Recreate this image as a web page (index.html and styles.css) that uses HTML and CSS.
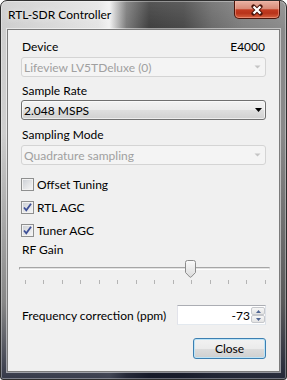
FILE: index.html
```html
<!DOCTYPE html>
<html>
<head>
<meta charset="utf-8">
<title>RTL-SDR Controller</title>
<link rel="stylesheet" href="styles.css">
</head>
<body>
<div class="window">
  <div class="titlebar">
    <span class="title">RTL-SDR Controller</span>
    <div class="close-x">
      <svg width="14" height="12" viewBox="0 0 14 12"><path d="M3.5 2.5 L10.5 9.5 M10.5 2.5 L3.5 9.5" stroke="#4a140a" stroke-width="4.2" stroke-linecap="round"/><path d="M3.5 2.5 L10.5 9.5 M10.5 2.5 L3.5 9.5" stroke="#ffffff" stroke-width="2.3"/></svg>
    </div>
  </div>
  <div class="client">
    <div class="label-row"><span>Device</span><span>E4000</span></div>
    <div class="combo disabled gap-s">
      <span>Lifeview LV5TDeluxe (0)</span>
      <svg class="arrow-sm" width="7" height="4" viewBox="0 0 7 4"><path d="M0.5 0.5 H6.5 L3.5 3.5 Z" fill="#c4c4c4"/></svg>
    </div>
    <div class="label gap-l2">Sample Rate</div>
    <div class="combo enabled gap-xs">
      <span>2.048 MSPS</span>
      <svg width="7" height="4" viewBox="0 0 7 4"><path d="M0 0 H7 L3.5 4 Z" fill="#000"/></svg>
    </div>
    <div class="label gap-l3">Sampling Mode</div>
    <div class="combo disabled gap-s">
      <span>Quadrature sampling</span>
      <svg class="arrow-sm" width="7" height="4" viewBox="0 0 7 4"><path d="M0.5 0.5 H6.5 L3.5 3.5 Z" fill="#c4c4c4"/></svg>
    </div>

    <div class="checks">
      <label class="check"><span class="box"></span><span>Offset Tuning</span></label>
      <label class="check"><span class="box"><svg width="11" height="11" viewBox="0 0 11 11"><path d="M2 5.5 L4.3 8.3 L9 1.8" fill="none" stroke="#3d4f97" stroke-width="1.8"/></svg></span><span>RTL AGC</span></label>
      <label class="check"><span class="box"><svg width="11" height="11" viewBox="0 0 11 11"><path d="M2 5.5 L4.3 8.3 L9 1.8" fill="none" stroke="#3d4f97" stroke-width="1.8"/></svg></span><span>Tuner AGC</span></label>
    </div>

    <div class="label gap-rf">RF Gain</div>
    <div class="slider">
      <div class="track"></div>
      <div class="ticks"><i></i><i></i><i></i><i></i><i></i><i></i><i></i><i></i><i></i><i></i><i></i><i></i><i></i><i></i></div>
      <svg class="thumb" width="11" height="18" viewBox="0 0 11 18">
        <defs><linearGradient id="tg" x1="0" y1="0" x2="0" y2="1"><stop offset="0" stop-color="#fbfbfb"/><stop offset="1" stop-color="#dadada"/></linearGradient></defs>
        <path d="M0.5 2.5 Q0.5 0.5 2.5 0.5 H8.5 Q10.5 0.5 10.5 2.5 V12.5 L6.2 17 Q5.5 17.6 4.8 17 L0.5 12.5 Z" fill="url(#tg)" stroke="#8c8c8c"/>
      </svg>
    </div>

    <div class="freq">
      <span class="freq-label">Frequency correction (ppm)</span>
      <div class="num">
        <span class="num-val">-73</span>
        <div class="spin">
          <span class="spin-btn"><svg width="5" height="3" viewBox="0 0 5 3"><path d="M0 3 L2.5 0 L5 3 Z" fill="#4f6592"/></svg></span>
          <span class="spin-btn"><svg width="5" height="3" viewBox="0 0 5 3"><path d="M0 0 H5 L2.5 3 Z" fill="#4f6592"/></svg></span>
        </div>
      </div>
    </div>

    <div class="btn-row">
      <button class="btn">Close</button>
    </div>
  </div>
</div>
</body>
</html>
```

FILE: styles.css
```css
* { box-sizing: border-box; }
html, body { margin: 0; padding: 0; }
body {
  width: 287px;
  height: 380px;
  overflow: hidden;
  background: #ffffff;
  font-family: Lato, "Segoe UI", "Liberation Sans", sans-serif;
  font-size: 12px;
  color: #000;
}
.window {
  width: 287px;
  height: 380px;
  border: 1px solid #2e2e2e;
  border-radius: 7px 7px 3px 3px;
  padding: 0 6px 7px;
  display: flex;
  flex-direction: column;
  background:
    linear-gradient(to bottom, rgba(255,255,255,0.12) 0, rgba(0,0,0,0) 8%, rgba(0,0,0,0) 35%, rgba(0,0,0,0.35) 80%, rgba(10,15,35,0.78) 100%),
    linear-gradient(to right, #cdcdcd 0, #dadada 20%, #e4e4e4 34%, #f2f2f2 38%, #7a7a7a 44%, #3e3e3e 52%, #474747 64%, #6a6a6a 74%, #7e7e7e 85%, #8a8a8a 100%);
  box-shadow: inset 0 0 0 1px rgba(255,255,255,0.35);
}
.titlebar {
  height: 28px;
  display: flex;
  justify-content: space-between;
  align-items: flex-start;
}
.title {
  padding: 6px 0 0 1px;
  line-height: 15px;
  text-shadow: 0 0 6px rgba(255,255,255,0.9);
}
.close-x {
  width: 46px;
  height: 18px;
  border: 1px solid #4d1409;
  border-top: none;
  border-radius: 0 0 5px 5px;
  background: linear-gradient(#e8b2a3 0%, #d98b78 45%, #c23b21 52%, #b8331a 72%, #d6613f 100%);
  box-shadow: inset 0 0 0 1px rgba(255,190,175,0.45);
  display: flex;
  align-items: center;
  justify-content: center;
}
.client {
  flex: 1;
  background: #f0f0f0;
  border: 1px solid #7b7b7b;
  box-shadow: 0 0 0 1px rgba(255,255,255,0.5);
  padding: 9px 13px 0;
  display: flex;
  flex-direction: column;
}
.label, .label-row {
  line-height: 15px;
  height: 15px;
  padding-left: 1px;
}
.label-row {
  display: flex;
  justify-content: space-between;
  padding-right: 1px;
}
.combo {
  height: 20px;
  border-radius: 3px;
  display: flex;
  align-items: center;
  justify-content: space-between;
  padding: 0 3px 0 2px;
  line-height: 15px;
}
.combo.disabled {
  border: 1px solid #d4d4d4;
  background: #f4f4f4;
  color: #a0a0a0;
}
.combo.disabled .arrow-sm { margin-right: 1px; }
.combo.enabled {
  border: 1px solid #707070;
  background: linear-gradient(#f3f3f3 0%, #ebebeb 50%, #dedede 50%, #d0d0d0 100%);
  box-shadow: inset 0 0 0 1px rgba(255,255,255,0.6);
}
.gap-s { margin-top: 3px; }
.gap-xs { margin-top: 2px; }
.gap-l2 { margin-top: 6px; }
.gap-l3 { margin-top: 7px; }
.checks {
  margin-top: 12px;
  display: flex;
  flex-direction: column;
  gap: 8px;
}
.check {
  display: flex;
  align-items: center;
  gap: 3px;
  height: 15px;
  line-height: 15px;
}
.box {
  width: 13px;
  height: 13px;
  border: 1px solid #8e8f8f;
  background: linear-gradient(135deg, #c9cdd3 0%, #e4e5e7 55%, #f7f7f7 100%);
  box-shadow: inset 0 0 0 1px #f2f2f2;
  display: block;
}
.box svg { display: block; }
.gap-rf { margin-top: 4px; }
.slider {
  position: relative;
  height: 27px;
  margin: 0 -4px 0 -2px;
}
.track {
  margin-top: 10px;
  height: 3px;
  border: 1px solid;
  border-color: #a6a6a6 #dcdcdc #ffffff #a6a6a6;
  background: #e2e2e2;
}
.ticks {
  margin: 10px 0 0 6px;
  width: 241px;
  height: 4px;
  display: flex;
  justify-content: space-between;
}
.ticks i {
  display: block;
  width: 1px;
  height: 4px;
  background: #b4b4b4;
}
.thumb {
  position: absolute;
  left: 166px;
  top: 3px;
}
.freq {
  margin-top: 21px;
  height: 20px;
  display: flex;
  justify-content: space-between;
  align-items: center;
}
.freq-label { padding-left: 1px; }
.num {
  width: 89px;
  height: 20px;
  border: 1px solid;
  border-color: #abadb3 #dbdfe6 #e3e9ef #e2e3ea;
  background: #fff;
  display: flex;
  align-items: center;
  justify-content: flex-end;
}
.num-val { line-height: 15px; }
.spin {
  width: 14px;
  height: 16px;
  margin-left: 1px;
  display: flex;
  flex-direction: column;
}
.spin-btn {
  flex: 1;
  border: 1px solid #c6c8cc;
  border-radius: 2px;
  background: linear-gradient(#f7f7f7, #e3e3e3);
  display: flex;
  align-items: center;
  justify-content: center;
}
.spin-btn svg { display: block; }
.btn-row {
  margin-top: 13px;
  display: flex;
  justify-content: flex-end;
}
.btn {
  width: 73px;
  height: 21px;
  padding: 0;
  border: 1px solid #3c7fb1;
  border-radius: 3px;
  background: linear-gradient(#f2f2f2 0%, #ebebeb 50%, #dddddd 50%, #cfcfcf 100%);
  box-shadow: inset 0 0 0 1px #bde4f7;
  font: inherit;
  color: #000;
  line-height: 15px;
}
```
